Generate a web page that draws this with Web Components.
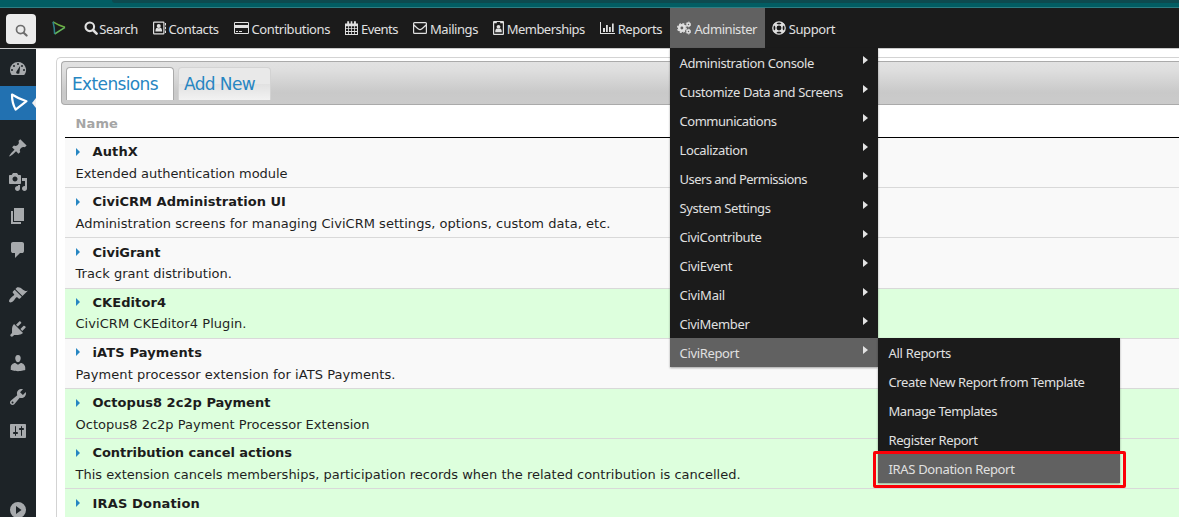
<!DOCTYPE html>
<html lang="en">
<head>
<meta charset="utf-8">
<title>Extensions</title>
<style>
html,body{margin:0;padding:0;height:517px;overflow:hidden;background:#fff}
</style>
</head>
<body>
<civi-app></civi-app>
<script>
const ICONS = {
  lens: ['0 0 14 14', '<circle cx="5.8" cy="5.8" r="4.3" fill="none" stroke="currentColor" stroke-width="2.1"/><path d="M9 9l3.6 3.6" stroke="currentColor" stroke-width="2.6" stroke-linecap="round"/>'],
  lensgray: ['0 0 14 14', '<circle cx="6" cy="6" r="4.400" fill="none" stroke="currentColor" stroke-width="1.800"/><path d="M9.300 9.300l3.200 3.200" stroke="currentColor" stroke-width="2.300" stroke-linecap="round"/>'],
  address: ['0 0 13 14', '<path fill-rule="evenodd" d="M1.2 .5h9.100q1.200 0 1.200 1.200v10.600q0 1.200-1.200 1.200H1.200Q0 13.500 0 12.300V1.700Q0 .5 1.200 .5zM1.200 1.700v10.600h9.100V1.700z"/><circle cx="5.750" cy="4.900" r="2"/><path d="M2.400 10.600q0-3.600 1.900-3.800 1.450 1 2.900 0 1.900.2 1.900 3.800zM12 2h1v2.400h-1zM12 5.800h1v2.400h-1zM12 9.600h1V12h-1z"/>'],
  card: ['0 0 15 12', '<path fill-rule="evenodd" d="M1.200 0h12.600Q15 0 15 1.200v9.600q0 1.200-1.200 1.200H1.200Q0 12 0 10.800V1.200Q0 0 1.200 0zM1 1v2h13V1zM1 6v5h13V6z"/><path d="M2 9h2v1H2zM5 9h3v1H5z"/>'],
  calendar: ['0 0 13 14', '<path fill-rule="evenodd" d="M0 2.500h13V14H0zM1 5.200v2h2.200v-2zM4 5.200v2h2.200v-2zM7 5.200v2h2.200v-2zM10 5.200v2h2v-2zM1 8v2h2.200V8zM4 8v2h2.200V8zM7 8v2h2.200V8zM10 8v2h2V8zM1 10.900V13h2.200v-2.100zM4 10.900V13h2.200v-2.100zM7 10.900V13h2.200v-2.100zM10 10.900V13h2v-2.100z"/><path d="M2.200.3h1.900v3.200H2.200zM5.700.3h1.600v3.200H5.700zM9 .3h1.900v3.200H9z"/>'],
  mail: ['0 0 14 12', '<path d="M.6 1.500q0-.9.900-.9h11q.9 0 .9.900v9q0 .9-.9.900h-11q-.9 0-.9-.9zM1 3q4.700 4.700 6 4.700t6-4.700" fill="none" stroke="currentColor" stroke-width="1.200"/>'],
  badge: ['0 0 11 14', '<path fill-rule="evenodd" d="M1 0h9q1 0 1 1v12q0 1-1 1H1q-1 0-1-1V1q0-1 1-1zM1.200 2.200v10.600h8.600V2.200H7.200V1H3.800v1.200z"/><circle cx="5.500" cy="5.800" r="1.900"/><path d="M2.200 11.200q0-3.400 1.900-3.600 1.400 1 2.800 0 1.900.2 1.900 3.600z"/>'],
  chart: ['0 0 15 12', '<path d="M0 0h1v11h14v1H0zM3 6h2v4H3zM6 3h1.800v7H6zM9 5h1.800v5H9zM12 1.500h1.700V10H12z"/>'],
  gears: ['0 0 14 14', '<circle cx="4.900" cy="7" r="2.700" fill="none" stroke="currentColor" stroke-width="2.500"/><circle cx="4.900" cy="7" r="4.300" fill="none" stroke="currentColor" stroke-width="1.300" stroke-dasharray="1.900 1.480"/><g fill="none" stroke="currentColor"><circle cx="11.500" cy="3.400" r="1.500" stroke-width="1.500"/><circle cx="11.500" cy="3.400" r="2.400" stroke-width=".9" stroke-dasharray="1.250"/><circle cx="11.500" cy="10.600" r="1.500" stroke-width="1.500"/><circle cx="11.500" cy="10.600" r="2.400" stroke-width=".9" stroke-dasharray="1.250"/></g>'],
  ring: ['0 0 14 14', '<g fill="none" stroke="currentColor"><circle cx="7" cy="7" r="6.200" stroke-width="1.300"/><circle cx="7" cy="7" r="3.100" stroke-width="1.300"/><path d="M2.600 2.600l2.300 2.300M11.400 2.600L9.100 4.900M2.600 11.400l2.300-2.300M11.400 11.400L9.100 9.100" stroke-width="3.400"/></g>'],
  civi: ['0 0 20 20', '<path d="M4 2.500Q10.500 6.800 18.500 9.200L7.600 17.600Q3.800 10.500 4 2.500z" fill="none" stroke="currentColor" stroke-width="2.200" stroke-linejoin="round"/>'],
  civigreen: ['0 0 14 14', '<path d="M1 .8Q6 4 13 6.300" fill="none" stroke="#6eae43" stroke-width="1.500"/><path d="M13 6.300L2.600 13" fill="none" stroke="#65b75b" stroke-width="1.500"/><path d="M2.600 13Q2.600 7 1 .8" fill="none" stroke="#2e838c" stroke-width="1.500"/>'],
  dash: ['0 0 20 20', '<path fill-rule="evenodd" d="M3.760 16h12.480A7.998 7.998 0 0 0 10 3a8 8 0 0 0-8 8c0 1.890.660 3.630 1.760 5zM10 4a1 1 0 1 1 0 2 1 1 0 0 1 0-2zM6 6a1 1 0 1 1 0 2 1 1 0 0 1 0-2zm8 0a1 1 0 1 1 0 2 1 1 0 0 1 0-2zM4 10a1 1 0 1 1 0 2 1 1 0 0 1 0-2zm12 0a1 1 0 1 1 0 2 1 1 0 0 1 0-2zM12.200 6.700l-.7 6.300a1.600 1.600 0 1 1-3-.5z"/>'],
  pin: ['0 0 20 20', '<path d="M10.440 3.020l1.820-1.820 6.360 6.350-1.830 1.820c-1.050-.68-2.480-.57-3.410.36l-.75.75c-.92.93-1.040 2.350-.35 3.410l-1.830 1.820-2.410-2.410-2.800 2.790c-.42.42-3.380 2.710-3.800 2.290s1.860-3.390 2.280-3.810l2.790-2.790L4.100 9.360l1.830-1.820c1.050.69 2.480.57 3.400-.36l.75-.75c.93-.92 1.050-2.350.36-3.410z"/>'],
  media: ['0 0 20 20', '<path fill-rule="evenodd" d="M13 11V4c0-.55-.45-1-1-1h-1.670L9 1H5L3.670 3H2c-.55 0-1 .45-1 1v7c0 .55.45 1 1 1h10c.55 0 1-.45 1-1zM7 4.500c1.380 0 2.500 1.120 2.500 2.500S8.380 9.500 7 9.500 4.500 8.380 4.500 7 5.620 4.500 7 4.500zM14 6h5v10.500c0 1.380-1.120 2.500-2.500 2.500S14 17.880 14 16.500s1.120-2.500 2.500-2.500c.17 0 .34.02.5.05V9h-3V6zm-4 8.050V13h2v3.500c0 1.380-1.120 2.500-2.500 2.500S7 17.880 7 16.500 8.120 14 9.500 14c.17 0 .34.02.5.05z"/>'],
  pages: ['0 0 20 20', '<path d="M6 15V2h10v13H6zm-1 1h8v2H3V5h2v11z"/>'],
  comment: ['0 0 20 20', '<path d="M5 2h9q.82 0 1.410.59T16 4v7q0 .82-.59 1.410T14 13h-2l-5 5v-5H5q-.82 0-1.410-.59T3 11V4q0-.82.59-1.410T5 2z"/>'],
  brush: ['0 0 20 20', '<path d="M14.480 11.060L7.410 3.990l1.500-1.500c.5-.56 2.300-.47 3.510.32 1.210.8 1.430 1.280 2.910 2.100 1.180.64 2.450 1.260 4.450.85zm-.71.71L6.700 4.700 4.930 6.470c-.39.39-.39 1.020 0 1.410l1.060 1.060c.39.39.39 1.030 0 1.420-.6.6-1.430 1.110-2.210 1.690-.35.26-.7.53-1.010.84C1.430 14.230.4 16.080 1.400 17.070c.99 1 2.840-.03 4.180-1.360.31-.31.58-.66.85-1.020.57-.78 1.080-1.610 1.690-2.210.39-.39 1.020-.39 1.410 0l1.060 1.060c.39.39 1.020.39 1.410 0z"/>'],
  plug: ['0 0 20 20', '<path d="M13.110 4.360L9.870 7.600 8 5.730l3.240-3.240c.35-.34 1.050-.2 1.560.32.52.51.66 1.210.31 1.550zm-8 1.770l.91-1.120 9.010 9.010-1.190.84c-.71.71-2.630 1.160-3.820 1.160H6.140L4.900 17.260c-.59.59-1.540.59-2.120 0-.59-.58-.59-1.530 0-2.120l1.240-1.240v-3.880c0-1.130.4-3.190 1.090-3.890zm7.260 3.970l3.240-3.240c.34-.35 1.040-.21 1.550.31.52.51.66 1.210.31 1.550l-3.240 3.250z"/>'],
  user: ['0 0 20 20', '<path d="M10 9.250c-2.270 0-2.730-3.440-2.730-3.440C7 4.020 7.820 2 9.970 2c2.160 0 2.980 2.020 2.710 3.810 0 0-.41 3.440-2.680 3.440zm0 2.570L12.720 10c2.390 0 4.520 2.330 4.520 4.530v2.490s-3.650 1.130-7.240 1.130c-3.650 0-7.240-1.130-7.240-1.130v-2.490c0-2.250 1.940-4.480 4.470-4.480z"/>'],
  wrench: ['0 0 20 20', '<path fill-rule="evenodd" d="M16.680 9.770c-1.340 1.340-3.300 1.670-4.950.99l-5.410 6.520c-.99.99-2.590.99-3.580 0s-.99-2.590 0-3.570l6.520-5.420c-.68-1.650-.35-3.610.99-4.950 1.280-1.280 3.120-1.620 4.720-1.060l-2.890 2.890 2.820 2.820 2.860-2.870c.53 1.580.18 3.390-1.080 4.650zM3.810 16.210c.4.39 1.040.39 1.430 0 .4-.4.4-1.040 0-1.430-.39-.4-1.030-.4-1.430 0-.39.39-.39 1.030 0 1.430z"/>'],
  sliders: ['0 0 20 20', '<path fill-rule="evenodd" d="M18 16V4c0-.55-.45-1-1-1H3c-.55 0-1 .45-1 1v12c0 .55.45 1 1 1h14c.55 0 1-.45 1-1zM8 11h1c.55 0 1 .45 1 1s-.45 1-1 1H8v1.500c0 .28-.22.5-.5.5s-.5-.22-.5-.5V13H6c-.55 0-1-.45-1-1s.45-1 1-1h1V5.500c0-.28.22-.5.5-.5s.5.22.5.5V11zm5-2h-1c-.55 0-1-.45-1-1s.45-1 1-1h1V5.500c0-.28.22-.5.5-.5s.5.22.5.5V7h1c.55 0 1 .45 1 1s-.45 1-1 1h-1v5.500c0 .28-.22.5-.5.5s-.5-.22-.5-.5V9z"/>'],
  collapse: ['0 0 20 20', '<path fill-rule="evenodd" d="M10 2a8 8 0 1 0 0 16 8 8 0 0 0 0-16zM8 6l5.500 4L8 14z"/>']
};

class UiIcon extends HTMLElement {
  connectedCallback() {
    const [box, body] = ICONS[this.getAttribute('name')];
    const w = this.getAttribute('w') || box.split(' ')[2], h = this.getAttribute('h') || box.split(' ')[3];
    this.attachShadow({mode: 'open'}).innerHTML =
      `<style>:host{display:block;flex:none;width:${w}px;height:${h}px}svg{display:block}</style>
       <svg width="${w}" height="${h}" viewBox="${box}" fill="currentColor">${body}</svg>`;
  }
}

/* One line of text, tracked so that it spans the width in its w attribute. */
class FitText extends HTMLElement {
  connectedCallback() {
    this.attachShadow({mode: 'open'}).innerHTML =
      '<style>:host{display:block;white-space:nowrap}span{display:inline-block}</style><span><slot></slot></span>';
    const span = this.shadowRoot.querySelector('span'), w = +this.getAttribute('w');
    if (w) {
      const n = this.textContent.length;
      span.style.letterSpacing = ((w - span.getBoundingClientRect().width) / n).toFixed(3) + 'px';
    }
  }
}

class NavItem extends HTMLElement {
  connectedCallback() {
    const a = k => this.getAttribute(k);
    this.attachShadow({mode: 'open'}).innerHTML =
      `<style>:host{display:flex;box-sizing:border-box;flex:none;width:${a('width')}px;height:40px;padding-left:7px;color:#e0e0e0}
       :host([open]){background:#616161}
       .i{width:${a('gap')}px;height:40px;display:flex;align-items:center;flex:none;box-sizing:border-box}
       fit-text{line-height:42px}</style>
       <div class="i"><ui-icon name="${a('icon')}"></ui-icon></div><fit-text w="${a('text')}">${a('label')}</fit-text>`;
  }
}

class MenuItem extends HTMLElement {
  connectedCallback() {
    const a = k => this.getAttribute(k);
    this.attachShadow({mode: 'open'}).innerHTML =
      `<style>:host{display:flex;justify-content:space-between;box-sizing:border-box;height:29px;padding:0 10px 0 9.500px;color:#e0e0e0}
       :host([active]){background:#616161}fit-text{line-height:30px}
       i{margin:8px .5px 0 0;width:0;height:0;border:4.500px solid transparent;border-left:5px solid #e3e3e3;border-right:0}</style>
       <fit-text w="${a('text')}">${a('label')}</fit-text>${this.hasAttribute('more') ? '<i></i>' : ''}`;
  }
}

class MenuPanel extends HTMLElement {
  connectedCallback() {
    this.attachShadow({mode: 'open'}).innerHTML =
      '<style>:host{display:block;background:#1b1b1b;box-shadow:0 1px 2px rgba(0,0,0,.35);font:13px "Noto Sans",sans-serif}</style><slot></slot>';
  }
}

class SideBar extends HTMLElement {
  connectedCallback() {
    const cell = n => `<div class="c"><ui-icon name="${n}"></ui-icon></div>`;
    this.attachShadow({mode: 'open'}).innerHTML =
      `<style>:host{display:flex;flex-direction:column;flex:none;width:36px;background:#1d2327;color:#a7aaad;padding-top:3px;box-sizing:border-box;overflow:hidden}
       .c{height:34px;flex:none;display:flex;align-items:center;padding-left:7.500px;box-sizing:border-box}
       .on{background:#2271b1;color:#fff;justify-content:space-between;padding-left:8px;padding-bottom:3px}
       .on i{border:5px solid transparent;border-right:4px solid #f0f0f1;border-left:0;margin-top:3px}
       .s{height:11px;flex:none}.e{height:45px;flex:none}</style>
       ${cell('dash')}<div class="c on"><ui-icon name="civi"></ui-icon><i></i></div><div class="s"></div>
       ${['pin', 'media', 'pages', 'comment'].map(cell).join('')}<div class="s"></div>
       ${['brush', 'plug', 'user', 'wrench', 'sliders'].map(cell).join('')}<div class="e"></div>${cell('collapse')}`;
  }
}

class ExtRow extends HTMLElement {
  connectedCallback() {
    const a = k => this.getAttribute(k);
    this.attachShadow({mode: 'open'}).innerHTML =
      `<style>:host{display:block;height:50.200px;box-sizing:border-box;border-bottom:1px solid #d9d9d9;background:#f9f9f9;padding:2.600px 0 0 10.500px;color:#1f1f1f}
       :host([on]){background:#dfd}
       .t{display:flex;align-items:center;height:22.200px}.t fit-text{font-weight:bold;color:#1c1c1c}
       i{border:4px solid transparent;border-left:4.500px solid #2786c2;border-right:0;margin:0 13px 0 0}
       .d{line-height:22px}</style>
       <div class="t"><i></i><fit-text w="${a('tw')}">${a('name')}</fit-text></div>
       <fit-text class="d" w="${a('dw')}">${a('desc')}</fit-text>`;
  }
}

class ExtPage extends HTMLElement {
  connectedCallback() {
    const rows = [
      ['AuthX', 45.5, 'Extended authentication module', 212],
      ['CiviCRM Administration UI', 193.5, 'Administration screens for managing CiviCRM settings, options, custom data, etc.', 535],
      ['CiviGrant', 68, 'Track grant distribution.', 156.5],
      ['CKEditor4', 73.5, 'CiviCRM CKEditor4 Plugin.', 171, 1],
      ['iATS Payments', 109.5, 'Payment processor extension for iATS Payments.', 320],
      ['Octopus8 2c2p Payment', 178, 'Octopus8 2c2p Payment Processor Extension', 294, 1],
      ['Contribution cancel actions', 199.5, 'This extension cancels memberships, participation records when the related contribution is cancelled.', 665, 1],
      ['IRAS Donation', 107.5, '', 0, 1]
    ];
    this.attachShadow({mode: 'open'}).innerHTML =
      `<style>:host{display:block;flex:1;min-width:0;overflow:hidden;padding:8px 0 0 20px;font:13px "DejaVu Sans",Verdana,sans-serif}
       .box{border:1px solid #d3d3d3;border-right:0;border-radius:5px 0 0 0;padding:3px 0 0 4px;height:480px}
       .tabs{display:flex;align-items:flex-start;gap:4px;height:44px;box-sizing:border-box;border:1px solid #aaa;border-right:0;border-radius:4px 0 0 4px;background:linear-gradient(#e2e2e2,#dedede 20%,#c9c9c9 72%,#cbcbcb);padding:5px 0 0 4px;font-size:17px;color:#2786c2}
       .tab{box-sizing:border-box;height:33px;border:1px solid #d3d3d3;border-bottom:0;border-radius:4px 4px 0 0;line-height:32px;padding-left:5px;width:93px;background:linear-gradient(#e9e9e9 0 50%,#e1e1e1 50%,#f2f2f2)}
       .sel{background:#fff;border-color:#aaa;width:108px}
       .table{margin-left:4px}
       .h{height:33px;box-sizing:border-box;border-bottom:1px solid #000;padding:8px 0 0 10.500px;line-height:22px;font-weight:bold;color:#a5a5a5}
       </style>
       <div class="box"><div class="tabs"><div class="tab sel"><fit-text w="86">Extensions</fit-text></div><div class="tab"><fit-text w="71">Add New</fit-text></div></div>
       <div class="table"><div class="h"><fit-text w="42.500">Name</fit-text></div>
       ${rows.map(r => `<ext-row name="${r[0]}" tw="${r[1]}" desc="${r[2]}" dw="${r[3]}" ${r[4] ? 'on' : ''}></ext-row>`).join('')}</div></div>`;
  }
}

class CiviApp extends HTMLElement {
  connectedCallback() {
    const nav = [
      ['Search', 'lens', 69, 15.3, 38.5], ['Contacts', 'address', 81, 15.5, 50], ['Contributions', 'card', 111, 17.5, 78.5],
      ['Events', 'calendar', 68, 16, 37], ['Mailings', 'mail', 80, 17, 48], ['Memberships', 'badge', 107, 13.7, 78],
      ['Reports', 'chart', 77, 17.7, 44.3], ['Administer', 'gears', 95, 17.5, 62.5], ['Support', 'ring', 80, 16.7, 46.5]
    ];
    const sub = [['Administration Console', 134.5], ['Customize Data and Screens', 163.3], ['Communications', 97], ['Localization', 68], ['Users and Permissions', 127.5], ['System Settings', 91], ['CiviContribute', 82], ['CiviEvent', 52.5], ['CiviMail', 45.5], ['CiviMember', 70], ['CiviReport', 59.5]];
    const rep = [['All Reports', 62.5], ['Create New Report from Template', 196], ['Manage Templates', 108.5], ['Register Report', 89], ['IRAS Donation Report', 126]];
    this.attachShadow({mode: 'open'}).innerHTML =
      `<style>:host{display:block;position:relative;width:1179px;height:517px;overflow:hidden}
       .top{height:7px;background:#025d63;border-bottom:1px solid #2d7e84;display:flex;justify-content:flex-end}
       .top i{width:1067px;height:3px;background:#0e4a4f;border-bottom-left-radius:3px}
       nav{height:40px;background:#1b1b1b;display:flex;font:13px "Noto Sans",sans-serif}
       .q{width:30px;height:30px;margin:6px 16px 0 6px;background:#ececec;border-radius:4px;display:grid;place-items:center;color:#6d6d6d;flex:none;box-sizing:border-box;padding-top:2px}
       .logo{width:25px;padding-top:13px;flex:none}
       main{display:flex;height:468px;border-top:1px solid #c9c9c9}
       .m1,.m2,.hl{position:absolute}
       .m1{left:670px;top:48px;width:208px}.m2{left:878px;top:338px;width:242px;--x:0}
       .hl{left:873px;top:451px;width:253px;height:37px;box-sizing:border-box;border:3px solid #fb0007;border-radius:2px}
       .m2 menu-item{padding-left:10.500px}</style>
       <div class="top"><i></i></div>
       <nav><div class="q"><ui-icon name="lensgray" w="13" h="13"></ui-icon></div><div class="logo"><ui-icon name="civigreen"></ui-icon></div>
       ${nav.map(n => `<nav-item label="${n[0]}" icon="${n[1]}" width="${n[2]}" gap="${n[3]}" text="${n[4]}" ${n[0] === 'Administer' ? 'open' : ''}></nav-item>`).join('')}</nav>
       <main><side-bar></side-bar><ext-page></ext-page></main>
       <menu-panel class="m1">${sub.map((s, i) => `<menu-item label="${s[0]}" text="${s[1]}" more ${i === 10 ? 'active' : ''}></menu-item>`).join('')}</menu-panel>
       <menu-panel class="m2">${rep.map((s, i) => `<menu-item label="${s[0]}" text="${s[1]}" ${i === 4 ? 'active' : ''}></menu-item>`).join('')}</menu-panel>
       <div class="hl"></div>`;
  }
}

customElements.define('ui-icon', UiIcon);
customElements.define('fit-text', FitText);
customElements.define('nav-item', NavItem);
customElements.define('menu-item', MenuItem);
customElements.define('menu-panel', MenuPanel);
customElements.define('side-bar', SideBar);
customElements.define('ext-row', ExtRow);
customElements.define('ext-page', ExtPage);
customElements.define('civi-app', CiviApp);
</script>
</body>
</html>
